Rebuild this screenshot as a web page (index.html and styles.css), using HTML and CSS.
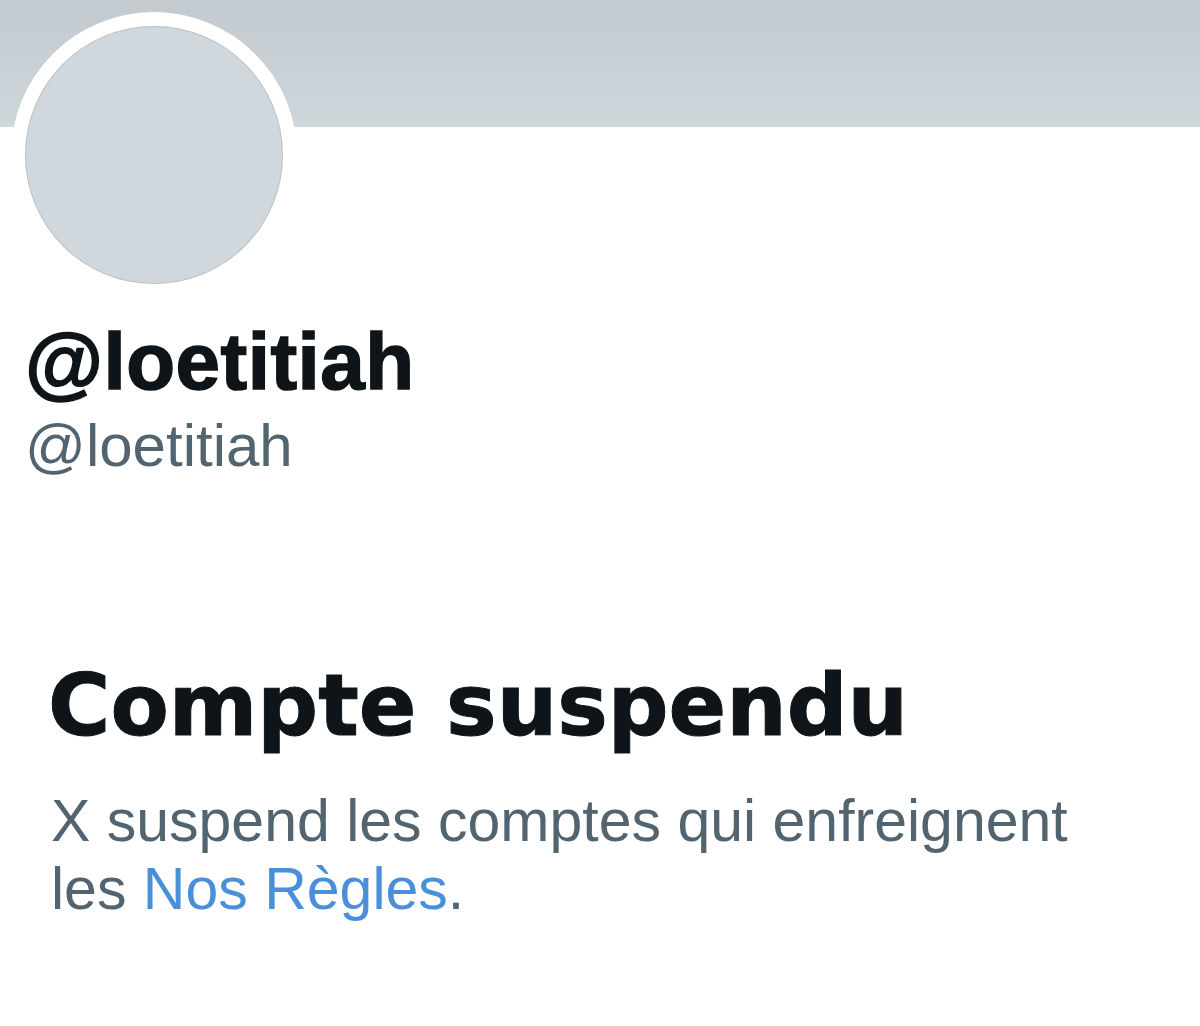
FILE: index.html
```html
<!DOCTYPE html>
<html lang="fr">
<head>
<meta charset="utf-8">
<title>Compte suspendu</title>
<link rel="stylesheet" href="styles.css">
</head>
<body>
<div class="page">
  <div class="banner"></div>
  <div class="avatar"><div class="avatar-inner"></div></div>
  <div class="identity">
    <div class="name">@loetitiah</div>
    <div class="handle">@loetitiah</div>
  </div>
  <div class="notice">
    <h1 class="title">Compte suspendu</h1>
    <p class="desc"><span class="line">X suspend les comptes qui enfreignent</span><br><span class="line">les <a class="link" href="#">Nos Règles</a>.</span></p>
  </div>
</div>
</body>
</html>
```

FILE: styles.css
```css
html, body {
  margin: 0;
  padding: 0;
  background: #ffffff;
}

.page {
  width: 1200px;
  height: 1026px;
  overflow: hidden;
  background: #ffffff;
  font-family: "Liberation Sans", Arial, sans-serif;
}

.banner {
  height: 127px;
  background: linear-gradient(180deg, #c3cacf 0%, #cfd6da 100%);
}

.avatar {
  width: 286px;
  height: 286px;
  margin: -115px 0 0 11px;
  border-radius: 50%;
  background: #ffffff;
  padding: 14px;
  box-sizing: border-box;
  position: relative;
}

.avatar-inner {
  width: 100%;
  height: 100%;
  border-radius: 50%;
  background: #d0d8dd;
  box-shadow: inset 0 0 0 1px rgba(120, 130, 140, 0.25);
}

.identity {
  padding-left: 25px;
  margin-top: 24px;
}

.name {
  font-weight: 700;
  font-size: 80px;
  line-height: 80px;
  letter-spacing: 0.5px;
  color: #0f1419;
  -webkit-text-stroke: 1.5px #0f1419;
}

.handle {
  margin-top: 14px;
  font-size: 60px;
  line-height: 60px;
  color: #536471;
}

.notice {
  padding-left: 48px;
  margin-top: 189px;
}

.title {
  margin: 0;
  font-family: "DejaVu Sans", sans-serif;
  font-weight: 700;
  font-size: 85px;
  line-height: 82px;
  color: #0f1419;
  -webkit-text-stroke: 1px #0f1419;
}

.desc {
  margin: 40px 0 0 3px;
  font-size: 59px;
  line-height: 68px;
  color: #536471;
}

.link {
  color: #4a90d9;
  text-decoration: none;
}
```
